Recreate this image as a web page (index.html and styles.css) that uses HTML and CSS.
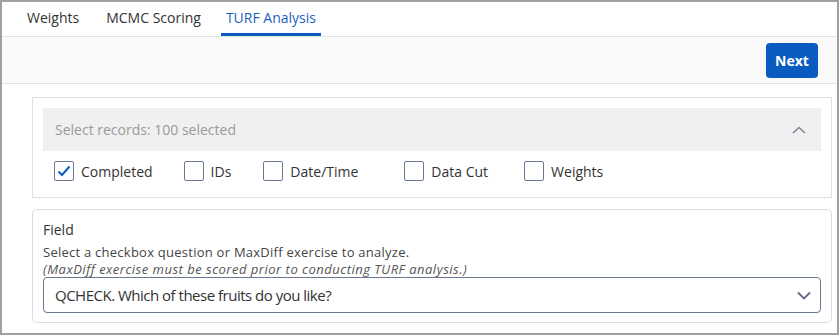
FILE: index.html
```html
<!DOCTYPE html>
<html lang="en">
<head>
<meta charset="UTF-8">
<meta name="viewport" content="width=device-width, initial-scale=1.0">
<title>TURF Analysis</title>
<link rel="stylesheet" href="styles.css">
</head>
<body>

<div class="frame">
  <div class="tabs">
    <div class="tab">Weights</div>
    <div class="tab">MCMC Scoring</div>
    <div class="tab active">TURF Analysis</div>
  </div>

  <div class="toolbar">
    <button class="next-btn">Next</button>
  </div>

  <div class="content">
    <div class="records-box">
      <div class="records-header">
        <span>Select records: 100 selected</span>
        <svg class="chev" width="14" height="8" viewBox="0 0 14 8">
          <path d="M1 7 L7 1.5 L13 7" fill="none" stroke="#7a8599" stroke-width="1.6"/>
        </svg>
      </div>
      <div class="checks">
        <label class="check"><span class="box">
          <svg width="14" height="12" viewBox="0 0 14 12"><path d="M1.5 6.5 L5 10 L12.5 1.5" fill="none" stroke="#0a5bbf" stroke-width="2"/></svg>
        </span>Completed</label>
        <label class="check"><span class="box"></span>IDs</label>
        <label class="check"><span class="box"></span>Date/Time</label>
        <label class="check"><span class="box"></span>Data Cut</label>
        <label class="check"><span class="box"></span>Weights</label>
      </div>
    </div>

    <div class="field-box">
      <div class="field-title">Field</div>
      <div class="field-desc">Select a checkbox question or MaxDiff exercise to analyze.</div>
      <div class="field-note">(MaxDiff exercise must be scored prior to conducting TURF analysis.)</div>
      <div class="select">
        <span>QCHECK. Which of these fruits do you like?</span>
        <svg width="14" height="9" viewBox="0 0 14 9">
          <path d="M1 1.5 L7 7.5 L13 1.5" fill="none" stroke="#5f6b82" stroke-width="1.8"/>
        </svg>
      </div>
    </div>
  </div>
</div>

</body>
</html>
```

FILE: styles.css
```css
body {
  margin: 0;
  font-family: 'Open Sans', 'Liberation Sans', sans-serif;
  color: #333;
  background-color: #fff;
}
.frame {
  width: 839px;
  height: 335px;
  box-sizing: border-box;
  border: 2px solid #a0a0a0;
  overflow: hidden;
}
.tabs {
  display: flex;
  gap: 17px;
  height: 34px;
  padding-left: 20px;
  border-bottom: 1px solid #e2e2e2;
  background-color: #fff;
}
.tab {
  padding: 0 5px;
  font-size: 14px;
  line-height: 31px;
  border-bottom: 3px solid transparent;
  color: #333;
}
.tab.active {
  color: #1d5fc1;
  border-bottom-color: #0a5bbf;
  margin-left: -2px;
}
.toolbar {
  display: flex;
  justify-content: flex-end;
  height: 47px;
  padding: 6px 19px 0 0;
  box-sizing: border-box;
  background-color: #fafafa;
  border-bottom: 1px solid #e2e2e2;
}
.next-btn {
  width: 52px;
  height: 35px;
  background-color: #0a5bbf;
  color: #fff;
  border: none;
  border-radius: 4px;
  font-family: inherit;
  font-size: 14px;
  font-weight: bold;
  padding: 0;
}
.content {
  padding: 13px 5px 0 30px;
}
.records-box {
  border: 1px solid #e0e0e0;
  padding: 10px 10px 0 10px;
  height: 101px;
  box-sizing: border-box;
}
.records-header {
  display: flex;
  align-items: center;
  justify-content: space-between;
  height: 43px;
  padding: 0 15px 0 12px;
  background-color: #f0f0f0;
  color: #9a9a9a;
  font-size: 14px;
}
.checks {
  display: flex;
  align-items: center;
  height: 40px;
  padding-left: 11px;
}
.check {
  display: flex;
  align-items: center;
  font-size: 14px;
  color: #333;
}
.check:nth-child(1) { margin-right: 31px; }
.check:nth-child(2) { margin-right: 32px; }
.check:nth-child(3) { margin-right: 46px; }
.check:nth-child(4) { margin-right: 36px; }
.box {
  width: 18px;
  height: 18px;
  border: 1px solid #6b7894;
  border-radius: 2px;
  margin-right: 7px;
  display: flex;
  align-items: center;
  justify-content: center;
}
.field-box {
  margin-top: 11px;
  border: 1px solid #dcdcdc;
  border-radius: 5px;
  padding: 10px 10px 10px 10px;
  height: 114px;
  box-sizing: border-box;
}
.field-title {
  font-size: 14px;
  line-height: 20px;
  color: #333;
}
.field-desc {
  font-size: 13px;
  line-height: 17px;
  letter-spacing: 0.25px;
  color: #444;
  margin-top: 4px;
}
.field-note {
  font-size: 13px;
  line-height: 16px;
  font-style: italic;
  letter-spacing: 0.5px;
  color: #555;
}
.select {
  display: flex;
  align-items: center;
  justify-content: space-between;
  height: 36px;
  box-sizing: border-box;
  border: 1px solid #6b7894;
  border-radius: 4px;
  padding: 0 9px 0 11px;
  font-size: 15px;
  letter-spacing: -0.5px;
  color: #333;
}
```
